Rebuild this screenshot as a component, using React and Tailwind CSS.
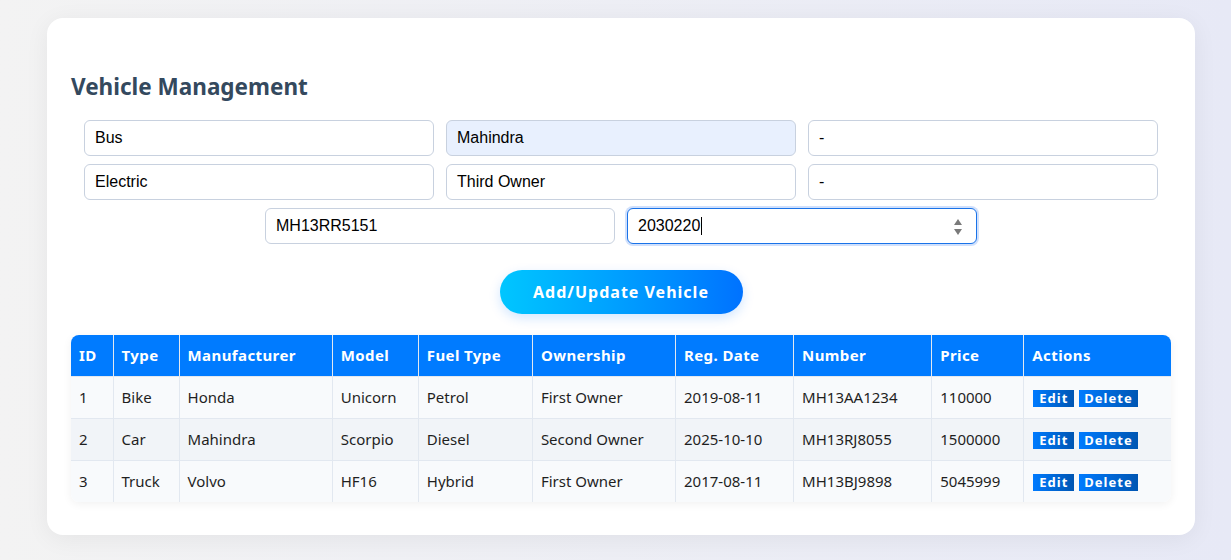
import React from "react";

const rows = [
  ["1", "Bike", "Honda", "Unicorn", "Petrol", "First Owner", "2019-08-11", "MH13AA1234", "110000"],
  ["2", "Car", "Mahindra", "Scorpio", "Diesel", "Second Owner", "2025-10-10", "MH13RJ8055", "1500000"],
  ["3", "Truck", "Volvo", "HF16", "Hybrid", "First Owner", "2017-08-11", "MH13BJ9898", "5045999"],
];
const heads = ["ID", "Type", "Manufacturer", "Model", "Fuel Type", "Ownership", "Reg. Date", "Number", "Price", "Actions"];
const widths = [42, 66, 153, 86, 114, 143, 118, 138, 92, 147];

function Field({ value, autofill, focused, number }) {
  return (
    <div
      className={
        "relative mx-[6px] my-[4px] flex h-[36px] w-[350px] items-center rounded-[6px] border pl-[10px] text-[16px] text-black " +
        (focused
          ? "border-[#1a73e8] shadow-[0_0_0_2px_rgba(66,133,244,0.25)] bg-white"
          : autofill
          ? "border-[#c8d1df] bg-[#e8f0fe]"
          : "border-[#c8d1df] bg-white")
      }
      style={{ fontFamily: '"Liberation Sans", Arial, sans-serif' }}
    >
      <span>{value}</span>
      {focused && <span className="ml-[1px] inline-block h-[18px] w-[1px] bg-black" />}
      {number && (
        <svg className="absolute right-[13px] top-[9px]" width="10" height="18" viewBox="0 0 10 18">
          <path d="M5 1 L9 7 L1 7 Z" fill="#7a7a7a" />
          <path d="M5 17 L9 11 L1 11 Z" fill="#7a7a7a" />
        </svg>
      )}
    </div>
  );
}

export default function App() {
  return (
    <div className="min-h-[560px] w-full bg-gradient-to-r from-[#f3f3f3] to-[#e7e9f6] pt-[18px] pb-[25px] pl-[47px]">
      <div
        className="w-[1148px] rounded-[16px] bg-white px-[24px] pt-[54px] pb-[33px] shadow-[0_4px_24px_rgba(0,0,0,0.06)]"
        style={{ fontFamily: '"Noto Sans", "Open Sans", sans-serif' }}
      >
        <h2 className="text-[22.5px] leading-[29px] font-bold text-[#34495e] mb-[15px]">Vehicle Management</h2>
        <div className="flex flex-wrap justify-center">
          <Field value="Bus" />
          <Field value="Mahindra" autofill />
          <Field value="-" />
          <Field value="Electric" />
          <Field value="Third Owner" />
          <Field value="-" />
          <Field value="MH13RR5151" />
          <Field value="2030220" focused number />
        </div>
        <div className="mt-[22px] flex justify-center">
          <button className="h-[44px] w-[243px] rounded-full bg-gradient-to-r from-[#00c6ff] to-[#0072ff] text-[16px] font-bold tracking-[1px] text-white shadow-[0_4px_12px_rgba(0,114,255,0.18)]">
            Add/Update Vehicle
          </button>
        </div>
        <div className="mt-[21px] overflow-hidden rounded-[8px] shadow-[0_2px_10px_rgba(0,0,0,0.06)]">
          <table className="w-full table-fixed border-collapse text-[15px] text-[#1f1f1f]">
            <colgroup>
              {widths.map((w, i) => (
                <col key={i} style={{ width: w }} />
              ))}
            </colgroup>
            <thead>
              <tr className="h-[41px] bg-[#007bff] text-white">
                {heads.map((h, i) => (
                  <th
                    key={h}
                    className={
                      "px-[8px] text-left font-bold tracking-[0.4px] " +
                      (i > 0 ? "border-l border-[#e2e8f0]" : "")
                    }
                  >
                    {h}
                  </th>
                ))}
              </tr>
            </thead>
            <tbody>
              {rows.map((r, ri) => (
                <tr key={ri} className={"h-[42px] " + (ri === 1 ? "bg-[#f1f4f8]" : "bg-[#f8fafc]")}>
                  {r.map((c, ci) => (
                    <td
                      key={ci}
                      className={
                        "px-[8px] whitespace-nowrap border-t border-[#e2e8f0] " +
                        (ci > 0 ? "border-l" : "")
                      }
                    >
                      {c}
                    </td>
                  ))}
                  <td className="border-l border-t border-[#e2e8f0] px-[8px]">
                    <div className="flex gap-[5px] pl-[1px] pt-[2px]">
                      <span className="h-[17px] bg-gradient-to-r from-[#007bff] to-[#0056b3] px-[6px] text-[13px] leading-[17px] font-bold tracking-[1px] text-white">
                        Edit
                      </span>
                      <span className="h-[17px] bg-gradient-to-r from-[#007bff] to-[#0056b3] px-[5px] text-[13px] leading-[17px] font-bold tracking-[1px] text-white">
                        Delete
                      </span>
                    </div>
                  </td>
                </tr>
              ))}
            </tbody>
          </table>
        </div>
      </div>
    </div>
  );
}
